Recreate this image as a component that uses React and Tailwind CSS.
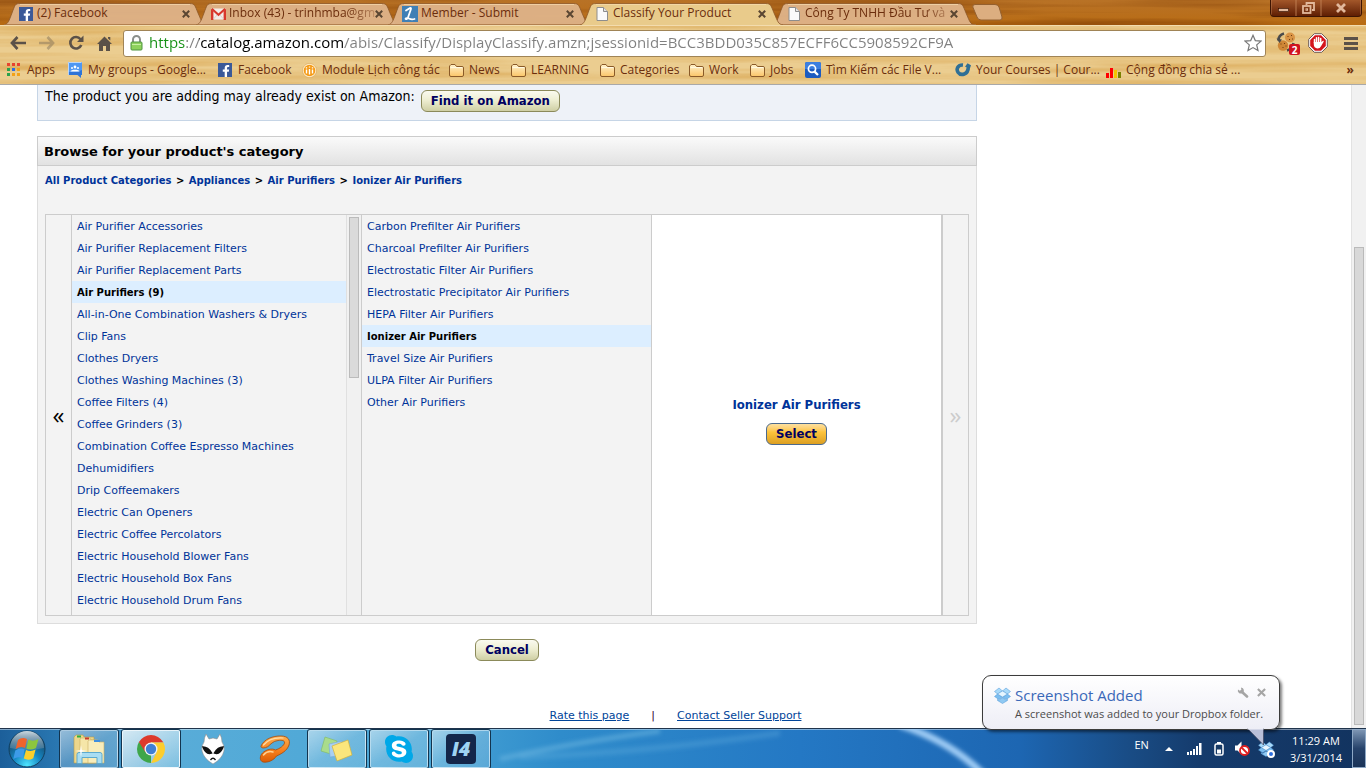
import React from "react";
import { FaFacebookF, FaSkype } from "react-icons/fa";

const UI = "font-['Open_Sans','Noto_Sans',sans-serif]";
const PAGE = "font-['DejaVu_Sans','Noto_Sans',sans-serif]";
const PAGE_NARROW = "font-['DejaVu_Sans_Condensed','DejaVu_Sans',sans-serif]";

/* ---------- wood theme ---------- */

function Grain({ id, seed, color, freq, strength }) {
  return (
    <svg className="absolute inset-0 -z-10 size-full" aria-hidden="true">
      <filter id={id} x="0" y="0" width="100%" height="100%" colorInterpolationFilters="sRGB">
        <feTurbulence type="fractalNoise" baseFrequency={freq} numOctaves="3" seed={seed} />
        <feColorMatrix values={`0 0 0 0 ${color[0]} 0 0 0 0 ${color[1]} 0 0 0 0 ${color[2]} ${strength} 0 0 0 ${-strength * 0.38}`} />
      </filter>
      <rect width="100%" height="100%" filter={`url(#${id})`} />
    </svg>
  );
}

/* ---------- small icons ---------- */

const FacebookIcon = () => (
  <span className="flex size-[14px] items-end justify-end overflow-hidden bg-[#3b5998] text-white">
    <FaFacebookF size={12} />
  </span>
);

const GmailIcon = () => (
  <svg width="15" height="12" viewBox="0 0 15 12">
    <rect x="0.5" y="0.5" width="14" height="11" fill="#f3ece8" />
    <path d="M0 12V1l2.400 2v9zM15 12V1l-2.400 2v9z" fill="#d8372c" />
    <path d="M0.800 0.800L7.500 6.800L14.200 0.800" fill="none" stroke="#d8372c" strokeWidth="2" />
    <path d="M2.500 11l3.500-4M12.500 11L9 7" stroke="#d9c9c4" strokeWidth="0.800" />
  </svg>
);

const ScriptIcon = () => (
  <svg width="16" height="16" viewBox="0 0 16 16">
    <rect width="16" height="16" fill="#3f7fb5" />
    <path d="M4 4.500L8 2Q9.500 1.500 8.800 3.500L6 11.500Q5 14 3.500 12.800Q4 11.500 7 12.500Q9.500 14 12.500 13" fill="none" stroke="#fff" strokeWidth="1.800" strokeLinecap="round" strokeLinejoin="round" />
  </svg>
);

const PageIcon = () => (
  <svg width="12" height="14" viewBox="0 0 12 14">
    <path d="M1 0.500h6.500l4 4v9H1z" fill="#fafafa" stroke="#8d8d8d" />
    <path d="M7.500 0.500v4h4" fill="#e4e4e4" stroke="#8d8d8d" />
  </svg>
);

const AppsIcon = () => (
  <svg width="14" height="14" viewBox="0 0 14 14" shapeRendering="crispEdges">
    <path d="M0 0h3v3H0zM5 0h3v3H5zM10 0h3v3h-3z" fill="#e8432f" />
    <path d="M0 5h3v3H0zM0 10h3v3H0z" fill="#2ba24c" />
    <path d="M5 5h3v3H5z" fill="#2f6de0" />
    <path d="M10 5h3v3h-3zM5 10h3v3H5zM10 10h3v3h-3z" fill="#f3a117" />
  </svg>
);

const GroupsIcon = () => (
  <svg width="14" height="16" viewBox="0 0 14 16">
    <path d="M0 0h14v13h-1v3l-3.500-3H0z" fill="#2f74d8" />
    <path d="M0 0h14v8L9 10H0z" fill="#4f97f2" />
    <path d="M0.500 13V0.500h13" fill="none" stroke="#d7e6fa" strokeWidth="0.800" />
    <circle cx="7" cy="5" r="1.400" fill="#fff" />
    <circle cx="4" cy="6" r="1" fill="#fff" />
    <circle cx="10" cy="6" r="1" fill="#fff" />
    <path d="M2.500 9.500c0-2.500 9-2.500 9 0z" fill="#fff" />
  </svg>
);

const ModuleIcon = () => (
  <svg width="15" height="15" viewBox="0 0 15 15">
    <circle cx="7.500" cy="7.500" r="7" fill="#fff4d8" stroke="#d9a04a" strokeWidth="0.600" />
    <circle cx="7.500" cy="7.500" r="5.800" fill="#f59a16" />
    <path d="M4.500 6.500v4M7.500 6v5.500M10.500 6.500v4" stroke="#fff" strokeWidth="1.400" />
    <path d="M3.800 4.800h1.400M6.800 4h1.400M9.800 4.800h1.400" stroke="#fff" strokeWidth="1.200" />
  </svg>
);

const FolderIcon = () => (
  <svg width="15" height="13" viewBox="0 0 15 13">
    <defs>
      <linearGradient id="fold" x1="0" y1="0" x2="0" y2="1">
        <stop offset="0" stopColor="#fff2cc" />
        <stop offset="1" stopColor="#fbc568" />
      </linearGradient>
    </defs>
    <path d="M0.500 11V2L2 0.500h4L7.500 2.500H13q1.500 0 1.500 1.500v7q0 1.500-1.500 1.500H2Q0.500 12.500 0.500 11z" fill="url(#fold)" stroke="#8a5a28" />
    <path d="M1.500 3.600h12" stroke="#fffbe6" />
  </svg>
);

const SearchIcon = () => (
  <svg width="16" height="16" viewBox="0 0 16 16">
    <rect width="16" height="16" rx="2" fill="#1c5bc0" />
    <path d="M0 2q0-2 2-2h12q2 0 2 2v5H0z" fill="#3c7fe0" />
    <circle cx="7" cy="6.800" r="3.600" fill="none" stroke="#fff" strokeWidth="1.700" />
    <path d="M9.600 9.600L13 13" stroke="#fff" strokeWidth="2.200" />
  </svg>
);

const CourseIcon = () => (
  <svg width="16" height="14" viewBox="0 0 16 14">
    <path d="M8 2C3 1.600 0.900 6 3 9.200C5.800 13.200 13.500 11.800 13.300 3.500" fill="none" stroke="#2f6f95" strokeWidth="3.600" />
    <path d="M10 3.800L12.500 0.300L16 2.200L15 5z" fill="#2f6f95" />
  </svg>
);

const BarsIcon = () => (
  <svg className="mt-1.5" width="15" height="10" viewBox="0 0 15 10">
    <path d="M0 5h3v5H0zM4 0h3v10H4z" fill="#f00" />
    <path d="M8 2h3v8H8z" fill="#f5c400" />
    <path d="M12 4h3v6h-3z" fill="#7a8000" />
  </svg>
);

const CloseX = ({ size = 8, width = 2 }) => (
  <svg width={size} height={size} viewBox="0 0 8 8">
    <path d="M0.800 0.800l6.400 6.400M7.200 0.800L0.800 7.200" stroke="currentColor" strokeWidth={width} />
  </svg>
);

/* ---------- browser ---------- */

const tabs = [
  { icon: <FacebookIcon />, title: "(2) Facebook" },
  { icon: <GmailIcon />, title: "Inbox (43) - trinhmba@gm", fade: true },
  { icon: <ScriptIcon />, title: "Member - Submit" },
  { icon: <PageIcon />, title: "Classify Your Product", active: true },
  { icon: <PageIcon />, title: "Công Ty TNHH Đầu Tư và", fade: true },
];

function Tab({ icon, title, active, fade }) {
  return (
    <div className={`relative isolate flex w-48 shrink-0 items-center pt-0.5 pr-[10px] pl-[10px] ${active ? "z-10" : ""}`}>
      <svg className="absolute bottom-0 -left-1 -z-10 h-[22px] w-[204px]" viewBox="0 0 204 22" preserveAspectRatio="none" aria-hidden="true">
        <path
          d="M0 22C4 21 5 18 8 10C11 2 11 0.500 16 0.500H186C191 0.500 191 3 194 10C198 19 198 21 203 22z"
          fill={active ? "#e9cb8b" : "#deb389"}
          fillOpacity={active ? 1 : 0.95}
        />
        <path
          d="M0 22C4 21 5 18 8 10C11 2 11 0.500 16 0.500H186C191 0.500 191 3 194 10C198 19 198 21 203 22"
          fill="none"
          stroke="#8a5426"
          strokeOpacity="0.750"
        />
        <path d="M16 1.500H186" stroke="#f6dcb0" strokeOpacity="0.700" />
        {!active && <path d="M0 21.500H204" stroke="#a87444" strokeOpacity="0.800" />}
      </svg>
      <span className="flex w-4 shrink-0 justify-center">{icon}</span>
      <button
        type="button"
        className={`ml-[3px] flex-1 pb-px text-left whitespace-nowrap ${fade ? "[mask-image:linear-gradient(to_right,#000_80%,#0004)]" : ""}`}
      >
        {title}
      </button>
      <button type="button" aria-label={`Close ${title}`} className="text-[#5a4632]">
        <CloseX />
      </button>
    </div>
  );
}

function WindowControls() {
  const btn = "flex h-4 items-center justify-center border-x border-[#c98a5c]/40 text-[#e2b89c]";
  return (
    <div className="mr-1 flex self-start overflow-hidden rounded-b border border-t-0 border-[#3d1402] bg-linear-to-b from-[#a3572a] to-[#5f1e04]">
      <button type="button" aria-label="Minimize" className={`${btn} w-[25px]`}>
        <svg width="11" height="10" viewBox="0 0 11 10"><rect x="0.500" y="5.500" width="10" height="3" fill="currentColor" stroke="#2f0e00" strokeWidth="0.600" /></svg>
      </button>
      <button type="button" aria-label="Restore" className={`${btn} w-[25px]`}>
        <svg width="13" height="12" viewBox="0 0 13 12" fill="none" stroke="currentColor" strokeWidth="1.800">
          <path d="M4.500 3V1h7.500v7H10" />
          <rect x="1" y="4" width="7.500" height="7" />
          <rect x="4" y="6.800" width="1.500" height="1.500" strokeWidth="1" />
        </svg>
      </button>
      <button type="button" aria-label="Close" className={`${btn} w-10`}>
        <CloseX size={10} width={2.2} />
      </button>
    </div>
  );
}

function TabStrip() {
  return (
    <div className="relative isolate flex h-[25px] items-stretch overflow-hidden bg-linear-to-b from-[#b87226] to-[#b96c12] pl-2">
      <Grain id="g1" seed="4" color={[0.5, 0.24, 0.02]} freq="0.004 0.14" strength={1.2} />
      {tabs.map((t) => (
        <Tab key={t.title} {...t} />
      ))}
      <button type="button" aria-label="New tab" className="ml-1 self-center">
        <svg width="31" height="17" viewBox="0 0 31 17">
          <path d="M3 0.500H23Q26 0.500 27 3L30 13Q30.500 16 28 16H9Q6 16 5 13L0.800 3Q0.300 0.500 3 0.500z" fill="#dcae80" stroke="#94602f" />
        </svg>
      </button>
      <div className="ml-auto">
        <WindowControls />
      </div>
    </div>
  );
}

function Toolbar() {
  const ic = "flex w-[29px] items-center justify-center";
  return (
    <div className="flex h-[34px] items-center pr-2 pl-[3px] text-[#5b5148]">
      <button type="button" aria-label="Back" className={ic}>
        <svg width="16" height="14" viewBox="0 0 16 14"><path d="M7.500 1L2 7l5.500 6M2 7h14" fill="none" stroke="currentColor" strokeWidth="2.700" /></svg>
      </button>
      <button type="button" aria-label="Forward" className={`${ic} opacity-35`}>
        <svg width="16" height="14" viewBox="0 0 16 14"><path d="M8.500 1L14 7l-5.500 6M14 7H0" fill="none" stroke="currentColor" strokeWidth="2.700" /></svg>
      </button>
      <button type="button" aria-label="Reload" className={ic}>
        <svg width="16" height="16" viewBox="0 0 16 16">
          <path d="M12.500 4.200A5.700 5.700 0 1 0 13.300 10" fill="none" stroke="currentColor" strokeWidth="2.600" />
          <path d="M15.500 0.500V7H9z" fill="currentColor" />
        </svg>
      </button>
      <button type="button" aria-label="Home" className={ic}>
        <svg width="15" height="15" viewBox="0 0 15 15">
          <path d="M7.500 0.500L15 8h-2v7H9v-5H6v5H2V8H0zM11 1h2.300v3.500L11 2.500z" fill="currentColor" />
        </svg>
      </button>
      <label className="ml-1 flex h-[27px] min-w-0 flex-1 items-center gap-1.5 rounded-[3px] border border-[#a08456] bg-white pr-[3px] pl-1.5">
        <svg className="shrink-0" width="13" height="16" viewBox="0 0 13 16">
          <path d="M3 8V4.500a3.500 3.500 0 0 1 7 0V8" fill="none" stroke="#8b8f8b" strokeWidth="2" />
          <rect x="1" y="7" width="11" height="8" rx="1" fill="#8ed15c" stroke="#4e9440" />
          <path d="M2 9.500h9" stroke="#c8efa4" />
        </svg>
        <input
          type="text"
          aria-label="Address"
          defaultValue="https://catalog.amazon.com/abis/Classify/DisplayClassify.amzn;jsessionid=BCC3BDD035C857ECFF6CC5908592CF9A"
          className="min-w-0 flex-1 bg-[linear-gradient(to_right,#159015_36px,#808080_36px,#808080_50px,#000_50px,#000_194px,#808080_194px)] bg-clip-text pb-0.5 text-[15px] leading-6 text-transparent outline-none"
        />
        <button type="button" aria-label="Bookmark this page">
          <svg width="18" height="18" viewBox="0 0 18 18">
            <path d="M9 1.300l2.300 5.300 5.700.5-4.300 3.800 1.300 5.700L9 13.600l-5 3 1.300-5.700L1 7.100l5.700-.5z" fill="#fff" stroke="#777" strokeWidth="1.200" />
          </svg>
        </button>
      </label>
      <div className="ml-[10px] flex items-center">
        <button type="button" aria-label="Cookies, 2" className="relative">
          <svg width="24" height="24" viewBox="0 0 24 24">
            <circle cx="14" cy="6.500" r="5" fill="#d99445" />
            <circle cx="7" cy="14.500" r="5.200" fill="#cf8636" />
            <path d="M2.500 9.500C2.500 5.500 4.500 3.500 8 2.500" fill="none" stroke="#4b4b4b" strokeWidth="2.600" />
            <path d="M0.500 7.500L6 8.500L3.500 12z" fill="#4b4b4b" />
            <path d="M17.500 12C16.500 16 14.500 18.500 11 19.500" fill="none" stroke="#4b4b4b" strokeWidth="2.600" />
            <path d="M11.500 5.500h1M15 4.500h1M16 8h1M13 8.500h1M4.500 13h1M8 12.500h1M6.500 16.500h1M9.500 15h1" stroke="#6e3a10" strokeWidth="1.200" />
          </svg>
          <span className="absolute right-0 bottom-0 flex h-[11px] w-[11px] items-center justify-center rounded-xs bg-[#d0131f] text-[10px] leading-none font-bold text-white">2</span>
        </button>
        <button type="button" aria-label="Ad blocker" className="ml-2">
          <svg width="20" height="20" viewBox="0 0 20 20">
            <path d="M6.300 0.700h7.400l5.600 5.600v7.400l-5.600 5.600H6.300L0.700 13.700V6.300z" fill="#fff" stroke="#6d5a55" />
            <path d="M6.900 2.200h6.200l4.700 4.700v6.200l-4.700 4.700H6.900L2.200 13.100V6.900z" fill="#d4141c" />
            <path d="M6.500 10V6.500M8.500 9V4.800M10.600 9V4.500M12.700 9V5.500" stroke="#fff" strokeWidth="1.500" strokeLinecap="round" />
            <path d="M5.800 9h7.700l1.700-1.500 0.600 1-2.800 4.800Q12 15.500 9.500 15.500Q5.800 15 5.800 11.500z" fill="#fff" />
          </svg>
        </button>
        <button type="button" aria-label="Menu" className="ml-4">
          <svg width="14" height="13" viewBox="0 0 14 13"><path d="M0 1.500h14M0 6.500h14M0 11.500h14" stroke="currentColor" strokeWidth="3" /></svg>
        </button>
      </div>
    </div>
  );
}

const bookmarks = [
  { icon: <AppsIcon />, label: "Apps", w: "w-[61px]" },
  { icon: <GroupsIcon />, label: "My groups - Google...", w: "w-[150px]" },
  { icon: <FacebookIcon />, label: "Facebook", w: "w-[84px]" },
  { icon: <ModuleIcon />, label: "Module Lịch công tác", w: "w-[147px]" },
  { icon: <FolderIcon />, label: "News", w: "w-[62px]" },
  { icon: <FolderIcon />, label: "LEARNING", w: "w-[89px]" },
  { icon: <FolderIcon />, label: "Categories", w: "w-[89px]" },
  { icon: <FolderIcon />, label: "Work", w: "w-[61px]" },
  { icon: <FolderIcon />, label: "Jobs", w: "w-[56px]" },
  { icon: <SearchIcon />, label: "Tìm Kiếm các File V...", w: "w-[150px]" },
  { icon: <CourseIcon />, label: "Your Courses | Cour...", w: "w-[150px]" },
  { icon: <BarsIcon />, label: "Cộng đồng chia sẻ ...", w: "w-[150px]" },
];

function Bookmarks() {
  return (
    <nav aria-label="Bookmarks" className="flex h-[25px] items-center border-b border-[#a9a9a9] pb-1 pl-[6px]">
      {bookmarks.map((b) => (
        <a key={b.label} href="#" className={`flex shrink-0 items-center gap-[5px] whitespace-nowrap ${b.w}`}>
          <span className="flex w-4 justify-center">{b.icon}</span>
          {b.label}
        </a>
      ))}
      <button type="button" aria-label="More bookmarks" className="mr-3 ml-auto font-bold">»</button>
    </nav>
  );
}

/* ---------- page ---------- */

const categories = [
  "Air Purifier Accessories",
  "Air Purifier Replacement Filters",
  "Air Purifier Replacement Parts",
  "Air Purifiers (9)",
  "All-in-One Combination Washers & Dryers",
  "Clip Fans",
  "Clothes Dryers",
  "Clothes Washing Machines (3)",
  "Coffee Filters (4)",
  "Coffee Grinders (3)",
  "Combination Coffee Espresso Machines",
  "Dehumidifiers",
  "Drip Coffeemakers",
  "Electric Can Openers",
  "Electric Coffee Percolators",
  "Electric Household Blower Fans",
  "Electric Household Box Fans",
  "Electric Household Drum Fans",
];

const purifiers = [
  "Carbon Prefilter Air Purifiers",
  "Charcoal Prefilter Air Purifiers",
  "Electrostatic Filter Air Purifiers",
  "Electrostatic Precipitator Air Purifiers",
  "HEPA Filter Air Purifiers",
  "Ionizer Air Purifiers",
  "Travel Size Air Purifiers",
  "ULPA Filter Air Purifiers",
  "Other Air Purifiers",
];

function CategoryList({ items, selected }) {
  return (
    <ul className="min-w-0 flex-1 leading-[21px] text-[#039]">
      {items.map((name) => (
        <li key={name} className={name === selected ? "bg-[#dceeff] text-[10px] font-bold text-black" : "text-[11px]"}>
          <a href="#" className="block pt-px pl-[5px] whitespace-nowrap">{name}</a>
        </li>
      ))}
    </ul>
  );
}

function PillButton({ children, primary }) {
  return (
    <button
      type="button"
      className={`${PAGE_NARROW} h-[22px] rounded-[6px] border px-[9px] text-[13px] leading-5 font-bold text-[#000060] ${
        primary
          ? "border-[#4d6a8c] bg-linear-to-b from-[#fde0a0] from-0% via-[#fdc43c] via-40% to-[#dc9f22]"
          : "border-[#8b8a5a] bg-linear-to-b from-[#fafaf0] from-0% via-[#eeeed2] via-45% to-[#cfcfa4]"
      }`}
    >
      {children}
    </button>
  );
}

const crumbs = ["All Product Categories", "Appliances", "Air Purifiers", "Ionizer Air Purifiers"];

function Page() {
  return (
    <main className={`${PAGE} min-w-0 flex-1 overflow-hidden bg-white text-[13px] text-black`}>
      <div className="ml-[37px] max-w-[940px]">
        <section className="flex items-start gap-1.5 border border-t-0 border-[#c6d5e6] bg-[#eef2f8] pt-[5px] pr-2 pb-2 pl-[7px]">
          <p className={`${PAGE_NARROW} text-[14px] leading-3`}>The product you are adding may already exist on Amazon:</p>
          <PillButton>Find it on Amazon</PillButton>
        </section>

        <section className="mt-[15px] border border-[#ddd] bg-[#f3f3f3]">
          <h2 className="-mx-px -mt-px border border-[#ccc] bg-linear-to-b from-[#fafafa] to-[#e2e2e2] px-1.5 pt-0.5 text-[13px] leading-[26px] font-bold">
            Browse for your product&apos;s category
          </h2>
          <nav aria-label="Breadcrumb" className="mb-[22px] px-[7px] pt-[5px] pb-px text-[10px] leading-5 font-bold">
            {crumbs.map((c, i) => (
              <React.Fragment key={c}>
                {i > 0 && <span className="px-px"> &gt; </span>}
                <a href="#" className="text-[#039]">{c}</a>
              </React.Fragment>
            ))}
          </nav>
          <div className="mx-[7px] mb-[7px] flex h-[402px] border border-[#ccc]">
            <button type="button" aria-label="Previous level" className={`${UI} w-[26px] shrink-0 border-r border-[#ccc] text-[24px] leading-none`}>«</button>
            <div className="flex w-[290px] border-r border-[#ccc]">
              <CategoryList items={categories} selected="Air Purifiers (9)" />
              <div className="w-[15px] border-l border-[#e0e0e0] bg-[#f1f1f1] px-0.5 pt-0.5">
                <div className="h-[161px] border border-[#bbb] bg-[#dadada]" />
              </div>
            </div>
            <div className="flex w-[290px] border-r border-[#ccc]">
              <CategoryList items={purifiers} selected="Ionizer Air Purifiers" />
            </div>
            <div className="flex min-w-0 flex-1 flex-col items-center justify-center gap-2 border-r-2 border-[#ccc] bg-white pt-[10px]">
              <h3 className={`${PAGE_NARROW} text-[13px] leading-5 font-bold text-[#039]`}>Ionizer Air Purifiers</h3>
              <PillButton primary>Select</PillButton>
            </div>
            <button type="button" aria-label="Next level" className={`${UI} w-[25px] shrink-0 text-[24px] leading-none text-[#ccc]`}>»</button>
          </div>
        </section>

        <div className="mt-[15px] flex justify-center">
          <PillButton>Cancel</PillButton>
        </div>
      </div>
      <footer className="mt-[47px] flex justify-center gap-[22px] text-[11px] leading-4 text-[#049]">
        <a href="#" className="underline">Rate this page</a>
        <span className="text-[#303]">|</span>
        <a href="#" className="underline">Contact Seller Support</a>
      </footer>
    </main>
  );
}

function PageScrollbar() {
  return (
    <div className="flex w-[15px] flex-col border-l border-[#e2e2e2] bg-[#f1f1f1] px-0.5 pb-[3px]">
      <div className="flex-[163]" />
      <div className="flex-[477] border border-[#bababa] bg-[#d8d8d8]" />
    </div>
  );
}

/* ---------- desktop taskbar ---------- */

const StartOrb = () => (
  <svg width="38" height="38" viewBox="0 0 38 38">
    <defs>
      <radialGradient id="orb" cx="0.500" cy="0.950" r="0.850">
        <stop offset="0" stopColor="#4fe6ff" />
        <stop offset="0.450" stopColor="#1587c4" />
        <stop offset="1" stopColor="#16405f" />
      </radialGradient>
      <linearGradient id="orbTop" x1="0" y1="0" x2="0" y2="1">
        <stop offset="0" stopColor="#dfeaf0" stopOpacity="0.900" />
        <stop offset="1" stopColor="#6d8ea5" stopOpacity="0.400" />
      </linearGradient>
    </defs>
    <circle cx="19" cy="19" r="18" fill="url(#orb)" stroke="#12405f" />
    <path d="M2 18a17 17 0 0 1 34 0q-17 4-34 0z" fill="url(#orbTop)" />
    <path d="M10 10Q14 6.500 19 9L17 18Q12.500 15.800 7.600 19z" fill="#f0642c" />
    <path d="M20.400 9.600Q25 12 30.500 9L28 18Q23 20.800 18.300 18.500z" fill="#8cc63e" />
    <path d="M7.300 20.400Q12 17.400 16.700 19.400L14.600 28Q10 26 5.300 29z" fill="#3d9be8" />
    <path d="M18 20Q22.600 22.200 27.600 19.600L25.300 28.200Q20.500 31 15.800 28.600z" fill="#fbcf2c" />
  </svg>
);

const ExplorerIcon = () => (
  <svg width="34" height="32" viewBox="0 0 34 32">
    <path d="M2 4l2-2h7l1 2h10V30H2z" fill="#ecd68c" stroke="#b79b4c" strokeWidth="0.600" />
    <path d="M8 6l1-1h9l1 2h5V30H8z" fill="#f5e6a8" stroke="#c9ae62" strokeWidth="0.600" />
    <path d="M16 8l1-1h9l1 2h5v21H16z" fill="#f8edbb" stroke="#c9ae62" strokeWidth="0.600" />
    <path d="M5 2.500h4v2H5z" fill="#2fae3f" /><path d="M13 4.500h4v2h-4z" fill="#c63b2b" /><path d="M22 7h6v2h-6z" fill="#3f8fe0" />
    <path d="M5 30.500v-9q0-2 2-2h21q2 0 2 2v9h-5v-6H10v6z" fill="#a9ddf2" stroke="#5daace" />
    <path d="M9 12l0.800 5.200 5.200 0.800-5.200 0.800L9 24l-0.800-5.200L3 18l5.200-0.800z" fill="#fff" />
  </svg>
);

const ChromeIcon = () => (
  <svg width="30" height="30" viewBox="0 0 30 30">
    <path d="M15 15V29A14 14 0 0 1 2.900 8z" fill="#3fa64a" />
    <path d="M15 8.500H27.400L27.100 8A14 14 0 0 0 2.900 8L9.400 18.200L15 15z" fill="#dd3a2c" />
    <path d="M20.600 18.200L15 29A14 14 0 0 0 27.400 8.500H15z" fill="#fccd2e" />
    <circle cx="15" cy="15" r="6.500" fill="#f4f4f4" />
    <circle cx="15" cy="15" r="5.200" fill="#3f7fd4" />
  </svg>
);

const FoobarIcon = () => (
  <svg width="26" height="32" viewBox="0 0 26 32">
    <path d="M6 1L9 6L13 5L17 6L20 1Q22 5 22 9Q25 13 24 18Q22 26 13 31Q4 26 2 18Q1 13 4 9Q4 5 6 1z" fill="#fff" stroke="#8c8c8c" strokeWidth="0.600" />
    <path d="M3 14Q8 14 11.500 20Q6 22 3 14zM23 14Q18 14 14.500 20Q20 22 23 14z" fill="#111" stroke="#111" strokeWidth="1.500" />
    <path d="M10.500 27Q13 23.500 15.500 27" fill="none" stroke="#111" strokeWidth="1.300" />
  </svg>
);

const OrangeLoopIcon = () => (
  <svg width="32" height="28" viewBox="0 0 32 28">
    <defs>
      <linearGradient id="loop" x1="0" y1="0" x2="0" y2="1">
        <stop offset="0" stopColor="#ffb050" />
        <stop offset="0.600" stopColor="#f57c1a" />
        <stop offset="1" stopColor="#d95a06" />
      </linearGradient>
    </defs>
    <path
      d="M2 11C5 4 14 0.800 22 1C29 1 31.500 5 30 10C28 16 22 19 17.500 21C15 25 9 28 4 27C0.500 26 0.500 21 3.500 18C7 14.500 13 13 16.500 15C21 13.500 25 10.500 25.500 8C26 5.500 23 5 19 5.500C14 6 11.500 9.500 9 11.500C6 13.500 1.500 13.500 2 11z"
      fill="url(#loop)"
      stroke="#a84a08"
      strokeWidth="0.800"
    />
    <path d="M4.500 10C9 4.500 17 2.500 24 3" fill="none" stroke="#ffdca6" strokeWidth="1.200" strokeLinecap="round" />
    <path d="M4.500 20C7 17 11 16 14 17" fill="none" stroke="#ffd092" strokeWidth="1.400" strokeLinecap="round" />
  </svg>
);

const NotesIcon = () => (
  <svg width="34" height="28" viewBox="0 0 34 28">
    <path d="M5 2L17 6L14 20L1 16z" fill="#a9dc8c" stroke="#7fb962" strokeWidth="0.600" />
    <path d="M9 9L22 6L24 20L10 22z" fill="#a8cff2" stroke="#76a9d8" strokeWidth="0.600" />
    <path d="M12 11L28 5L32 20L17 26z" fill="#fbe67c" stroke="#d3b23b" strokeWidth="0.700" />
  </svg>
);

const SkypeIcon = () => (
  <span className="relative flex items-center justify-center">
    <span className="absolute size-5 rounded-full bg-white" />
    <FaSkype size={32} className="relative text-[#00a8e8]" />
  </span>
);

const GameIcon = () => (
  <span className="flex h-[30px] w-[30px] items-center justify-center rounded bg-[#14264a] text-[20px] leading-none font-extrabold text-[#9fd3f3] italic">I4</span>
);

const taskButtons = [
  { name: "Windows Explorer", icon: <ExplorerIcon />, open: true },
  { name: "Google Chrome", icon: <ChromeIcon />, open: true, active: true },
  { name: "foobar2000", icon: <FoobarIcon /> },
  { name: "Media player", icon: <OrangeLoopIcon /> },
  { name: "Sticky Notes", icon: <NotesIcon />, open: true },
  { name: "Skype", icon: <SkypeIcon />, open: true },
  { name: "I4", icon: <GameIcon />, open: true },
];

function taskClass(t) {
  if (t.active) return "border-white/80 bg-linear-to-br from-[#e4f2f8]/90 to-[#8cc8e4]/70 shadow-[0_0_0_1px_#12344f]";
  if (t.open) return "border-white/50 bg-linear-to-br from-white/50 via-white/20 to-white/15 shadow-[0_0_0_1px_#12344f]";
  return "border-transparent";
}

const DropboxIcon = ({ size = 17 }) => (
  <svg width={size} height={size} viewBox="0 0 17 17" stroke="#4d97d6" strokeWidth="0.500">
    <path d="M5 1L8.500 4L3.500 7L0.500 4.500zM12 1L8.500 4L13.500 7L16.500 4.500z" fill="#a9dafa" />
    <path d="M3.500 7L8.500 10L5 12.500L0.500 9.500zM13.500 7L8.500 10L12 12.500L16.500 9.500z" fill="#7cbef0" />
    <path d="M8.500 4L13.500 7L8.500 10L3.500 7z" fill="#e6f5ff" />
    <path d="M3.500 12.200L5 13.200L8.500 10.800L12 13.200L13.500 12.200V13.500L8.500 16.500L3.500 13.500z" fill="#8fc9f3" />
  </svg>
);

function Notification() {
  return (
    <aside className="absolute right-[86px] bottom-[38px] z-20 w-[298px] rounded-[9px] border border-[#3c3c3c] bg-linear-to-b from-white to-[#eeeef6] pt-[9px] pr-2.5 pb-1.5 pl-[11px] shadow-[2px_2px_3px_rgba(0,0,0,0.5)]">
      <div className="flex items-center gap-1">
        <DropboxIcon />
        <h4 className="text-[15px] leading-5 text-[#3a68b8]">Screenshot Added</h4>
        <div className="mr-[3px] ml-auto flex items-center gap-2 self-start pt-0.5 text-[#a5a5a5]">
          <button type="button" aria-label="Options">
            <svg width="12" height="11" viewBox="0 0 12 11">
              <path d="M4.500 4.500L10 9.500" stroke="currentColor" strokeWidth="2.600" strokeLinecap="round" />
              <path d="M1 2.500A3 3 0 0 0 5 6.300A3 3 0 0 0 4 0.500L4.300 3L2.800 3.800z" fill="currentColor" />
            </svg>
          </button>
          <button type="button" aria-label="Close notification"><CloseX size={9} width={1.900} /></button>
        </div>
      </div>
      <p className="pl-[21px] text-[11px] leading-[18px] whitespace-nowrap text-[#4b4b4b]">A screenshot was added to your Dropbox folder.</p>
      <svg className="absolute top-[52px] right-[14px]" width="18" height="19" viewBox="0 0 18 19" aria-hidden="true">
        <path d="M0.500 0.500L16.500 17V0.500" fill="#b9bfd8" stroke="#444b66" strokeWidth="0.800" />
        <path d="M0.500 0.500h16" stroke="#eeeef6" strokeWidth="2" />
      </svg>
    </aside>
  );
}

function Tray() {
  return (
    <div className="ml-auto flex items-center text-[11px] text-white">
      <span className="mr-4 pb-1.5">EN</span>
      <button type="button" aria-label="Show hidden icons" className="mr-[14px]">
        <svg width="8" height="4" viewBox="0 0 8 4"><path d="M4 0L8 4H0z" fill="#fff" /></svg>
      </button>
      <svg className="mr-3" width="15" height="12" viewBox="0 0 15 12"><path d="M0 9h2v3H0zM3 8h2v4H3zM6 6h2v6H6zM9 3h2v9H9zM12 0h2.500v12H12z" fill="#fff" /></svg>
      <svg className="mr-2.5" width="10" height="15" viewBox="0 0 10 15">
        <path d="M3 1h4v2H3z" fill="#fff" />
        <rect x="1" y="3" width="8" height="11" rx="1.500" fill="#173a66" stroke="#fff" strokeWidth="1.500" />
        <path d="M3 8.500h4v4H3z" fill="#fff" />
      </svg>
      <svg className="mr-2" width="16" height="15" viewBox="0 0 16 15">
        <path d="M1 4.500h2.500L7.500 0.500v13L3.500 9.500H1z" fill="#fff" />
        <circle cx="10.500" cy="9.500" r="4.500" fill="#fff" stroke="#e01f1f" strokeWidth="1.800" />
        <path d="M7.500 6.500l6 6" stroke="#e01f1f" strokeWidth="1.800" />
      </svg>
      <span className="relative mr-4">
        <DropboxIcon size={16} />
        <span className="absolute -right-px -bottom-px size-2 rounded-full border-2 border-white bg-[#2c6fe0]" />
      </span>
      <time className="mr-2.5 text-center text-[11px] leading-[17px]">11:29 AM<br />3/31/2014</time>
      <button type="button" aria-label="Show desktop" className="h-[39px] w-[14px] border border-[#8fa9c6] bg-linear-to-b from-[#7d95b3] via-[#27436b] to-[#1a3358]" />
    </div>
  );
}

function Taskbar() {
  return (
    <footer className="relative isolate flex h-10 shrink-0 items-center border-t border-[#20344c] bg-[linear-gradient(to_right,#1c5f9a_0px,#2a78b2_60px,#58acd8_180px,#4aa6d6_420px,#2f8ccb_560px,#2478c4_800px,#1d66b2_1020px,#194c85_1130px,#153b6c_1200px,#12335f_100%)] shadow-[inset_0_1px_0_rgba(255,255,255,0.45)]">
      <svg className="absolute inset-0 -z-10 size-full" aria-hidden="true">
        <filter id="soft"><feGaussianBlur stdDeviation="2" /></filter>
        <g filter="url(#soft)" fill="none">
          <path d="M900 -4Q950 12 984 46" stroke="#9fccf5" strokeWidth="7" />
          <path d="M500 30Q570 14 660 2" stroke="#6ab4e0" strokeOpacity="0.600" strokeWidth="5" />
          <path d="M520 28Q640 24 780 4" stroke="#6ab4e0" strokeOpacity="0.300" strokeWidth="6" />
        </g>
      </svg>
      <button type="button" aria-label="Start" className="mr-[14px] ml-2"><StartOrb /></button>
      <div className="flex gap-1">
        {taskButtons.map((t) => (
          <button key={t.name} type="button" aria-label={t.name} className={`flex h-[38px] w-[58px] items-center justify-center rounded-xs border ${taskClass(t)}`}>
            {t.icon}
          </button>
        ))}
      </div>
      <Tray />
    </footer>
  );
}

export default function App() {
  return (
    <div className={`${UI} relative flex h-screen flex-col overflow-hidden text-[12px]`}>
      <header className="shrink-0 text-[#6b2d0c]">
        <TabStrip />
        <div className="relative isolate border-t border-[#f3dcae] bg-[#ebcd90]">
          <Grain id="g2" seed="11" color={[0.85, 0.65, 0.32]} freq="0.004 0.11" strength={1.6} />
          <Toolbar />
          <Bookmarks />
        </div>
      </header>
      <div className="flex min-h-0 flex-1">
        <Page />
        <PageScrollbar />
      </div>
      <Taskbar />
      <Notification />
    </div>
  );
}
